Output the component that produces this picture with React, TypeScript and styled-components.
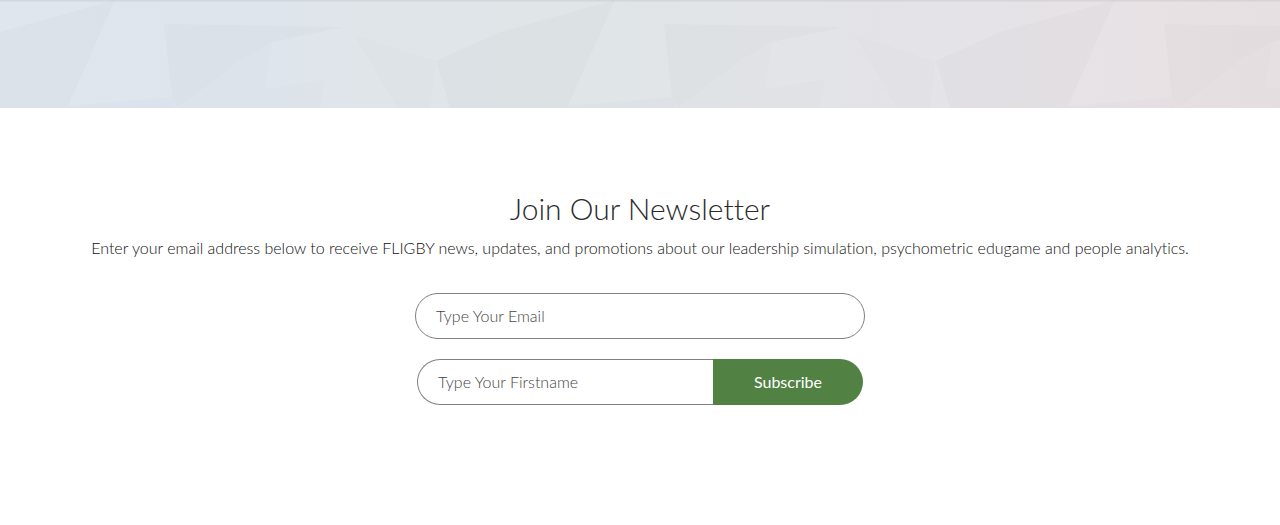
import React from "react";
import styled, { createGlobalStyle } from "styled-components";

const GlobalStyle = createGlobalStyle`
  *, *::before, *::after { box-sizing: border-box; }
  body {
    margin: 0;
    background: #fff;
    color: #111;
    font-family: Lato, "Open Sans", sans-serif;
    font-weight: 300;
    font-variant-ligatures: none;
  }
`;

const Banner = styled.div`
  overflow: hidden;
  background: linear-gradient(
    90deg,
    #dfe6ee 0%,
    #dee5ed 18%,
    #e0e5e9 30%,
    #e0e5e8 48%,
    #e3e4e8 64%,
    #e5e3e7 78%,
    #e8e2e5 90%,
    #e7e0e3 100%
  );
`;

const Facets = styled.svg`
  display: block;
  width: 100%;
  height: 108px;
`;

const Newsletter = styled.section`
  display: flex;
  flex-direction: column;
  align-items: center;
  padding: 80px 16px 120px;
  text-align: center;
`;

const Title = styled.h2`
  margin: 0;
  color: #2a2a2a;
  font-size: 30px;
  font-weight: 300;
  line-height: 40px;
`;

const Intro = styled.p`
  margin: 8px 0 33px;
  font-size: 16px;
  line-height: 24px;
`;

const Form = styled.form`
  display: flex;
  flex-direction: column;
  align-items: center;
  gap: 20px;
  width: 100%;
  max-width: 450px;
`;

const Row = styled.div`
  display: flex;
  width: 100%;
`;

const JoinedRow = styled(Row)`
  padding: 0 2px;
`;

const Field = styled.input<{ $joined?: boolean }>`
  flex: 1;
  min-width: 0;
  height: 46px;
  padding: 0 20px 2px;
  border: 1px solid #808080;
  border-right-width: ${(p) => (p.$joined ? "0" : "1px")};
  border-radius: ${(p) => (p.$joined ? "23px 0 0 23px" : "23px")};
  background: #fff;
  color: #111;
  font: inherit;
  font-size: 16px;

  &::placeholder {
    color: #444;
    opacity: 1;
  }
`;

const Submit = styled.button`
  width: 150px;
  height: 46px;
  padding: 0 0 2px;
  border: 0;
  border-radius: 0 23px 23px 0;
  background: #528144;
  color: #fff;
  font: inherit;
  font-size: 16px;
  font-weight: 400;
  cursor: pointer;
`;

const tiles = [-500, 0, 500, 1000];

export default function App() {
  return (
    <>
      <GlobalStyle />
      <Banner>
        <Facets viewBox="0 0 1280 108" preserveAspectRatio="xMidYMid slice" aria-hidden="true">
          {tiles.map((x) => (
            <g key={x} transform={`translate(${x} 0)`} fill="#1c2830">
              <polygon points="-64,61 0,32 115,0 67,108 -50,108" opacity="0.018" />
              <polygon points="67,106 172,97 176,108 67,108" opacity="0.012" />
              <polygon points="164,24 345,27 272,42 240,61 178,108 172,97" opacity="0.018" />
              <polygon points="240,61 272,42 266,89 325,79 320,108 178,108" opacity="0.009" />
              <polygon points="353,34 436,61 430,108 397,108" opacity="0.009" />
            </g>
          ))}
          <rect width="1280" height="1" fill="#000" opacity="0.06" />
          <rect y="1" width="1280" height="1" fill="#000" opacity="0.03" />
        </Facets>
      </Banner>
      <Newsletter>
        <Title>Join Our Newsletter</Title>
        <Intro>
          Enter your email address below to receive FLIGBY news, updates, and promotions about our
          leadership simulation, psychometric edugame and people analytics.
        </Intro>
        <Form onSubmit={(e) => e.preventDefault()}>
          <Row>
            <Field type="email" aria-label="Email" placeholder="Type Your Email" />
          </Row>
          <JoinedRow>
            <Field $joined type="text" aria-label="First name" placeholder="Type Your Firstname" />
            <Submit type="submit">Subscribe</Submit>
          </JoinedRow>
        </Form>
      </Newsletter>
    </>
  );
}
